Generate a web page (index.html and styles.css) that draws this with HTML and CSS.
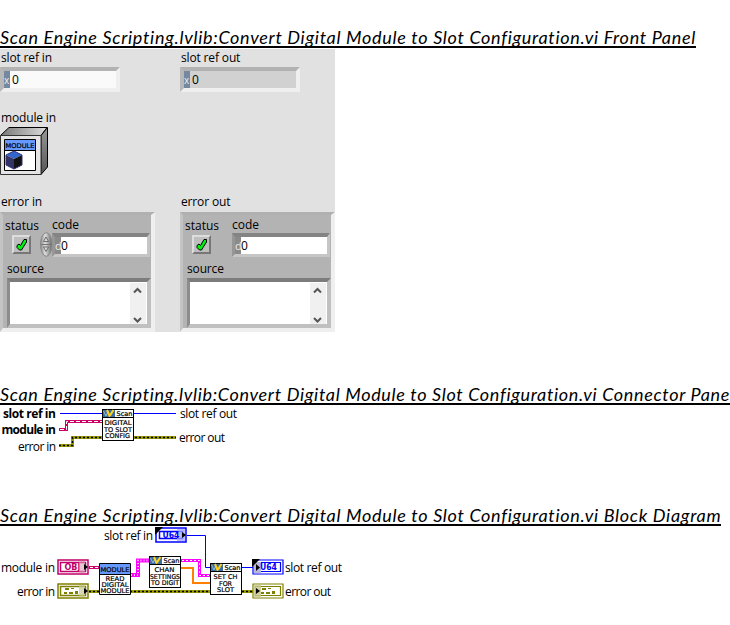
FILE: index.html
```
<!DOCTYPE html>
<html lang="en">
<head>
<meta charset="utf-8">
<title>Convert Digital Module to Slot Configuration.vi</title>
<link rel="stylesheet" href="styles.css">
</head>
<body>
<svg class="defs" width="0" height="0" aria-hidden="true">
  <defs>
    <g id="check"><path d="M2 7.5 4 6 5.5 7.5 9 1.5h2.5V4L8 9.5 6.5 12H4.5L2 9.5Z" fill="#00f010" stroke="#000" stroke-width="1"/></g>
    <g id="scan">
      <rect x=".5" y=".5" width="31" height="31" fill="#fff" stroke="#000"/>
      <path d="M1 1h12v7H1z" fill="#3c6ea0"/>
      <path d="M1.500 2 4 7 6 2.500M8.500 7 10 4" fill="none" stroke="#a8cbe8" stroke-width=".8"/>
      <path d="M5 1 7.500 7 11.500 1" fill="none" stroke="#ffd21c" stroke-width="2"/>
      <path d="M1 8.500h30" stroke="#000"/>
      <text class="px" x="14.500" y="7.300" textLength="16" lengthAdjust="spacingAndGlyphs">Scan</text>
    </g>
    <g id="cluster-glyph" fill="#808000">
      <path d="M8 5h4v2H8zM14 5h3v1h-3zM7 9h3v2H7zM12 9h4v2h-4zM18 8h3v3h-3z"/>
    </g>
  </defs>
</svg>

<h2 class="title front-title"><span>Scan Engine Scripting.lvlib:Convert Digital Module to Slot Configuration.vi Front Panel</span></h2>
<section class="panel">
  <div class="column">
    <div class="label">slot ref in</div>
    <div class="field"><span class="radix">x</span><span class="value">0</span></div>
    <div class="label module-label">module in</div>
    <svg class="module" width="48" height="48" viewBox="0 0 48 48">
      <defs><linearGradient id="top"><stop stop-color="#777"/><stop offset="1" stop-color="#ddd"/></linearGradient>
      <linearGradient id="side" x2="0" y2="1"><stop stop-color="#999"/><stop offset="1" stop-color="#555"/></linearGradient></defs>
      <path d="M.5 8.500 9 .5h38L41 8.500z" fill="url(#top)" stroke="#000"/>
      <path d="M41 8.500 47.500 .5V40L41 47.500z" fill="url(#side)" stroke="#000"/>
      <path d="M.5 8.500H41v39H.5z" fill="#e4e4e4" stroke="#333"/>
      <path d="M4.500 12.500h31v31h-31z" fill="#fff" stroke="#000"/>
      <path d="M5 13h30v10H5z" fill="#6699ff"/>
      <path d="M5 23.500h30" stroke="#000"/>
      <text class="px" x="5.500" y="20.500" textLength="29" lengthAdjust="spacingAndGlyphs">MODULE</text>
      <path d="M14 24 22 28 14 32 6 28z" fill="#3366cc"/>
      <path d="M6 28 14 32v10l-8-4z" fill="#333366"/>
      <path d="M22 28 14 32v10l8-4z" fill="#111"/>
      <path d="M14 24 22 28v10l-8 4-8-4V28z" fill="none" stroke="#303078"/>
    </svg>
    <div class="label error-label">error in</div>
    <div class="cluster">
      <div class="row">
        <div class="status"><div class="label">status</div>
          <svg class="button" width="19" height="19" viewBox="-1 -1 15 15"><use href="#check"/></svg></div>
        <svg class="spinner" width="13" height="25" viewBox="0 0 13 25">
          <defs><linearGradient id="knob"><stop stop-color="#888"/><stop offset=".4" stop-color="#ddd"/><stop offset="1" stop-color="#666"/></linearGradient></defs>
          <ellipse cx="6.300" cy="12.500" rx="5.800" ry="11.800" fill="url(#knob)" stroke="#888"/>
          <path d="M1 12.500h11" stroke="#777"/>
          <path d="M3.500 9.500 6 5l2.500 4.500zM3.500 15h5L6 19.500z" fill="#ddd" stroke="#555" stroke-width=".8"/>
        </svg>
        <div class="code"><div class="label">code</div>
          <div class="number"><span class="digit">d</span><span>0</span></div></div>
      </div>
      <div class="label source-label">source</div>
      <div class="source"><div class="scroll">
        <svg width="16" height="41" viewBox="0 0 16 41"><path d="M4 9.500 7.500 6 11 9.500M4 35l3.500 3.500L11 35" fill="none" stroke="#555" stroke-width="2"/></svg>
      </div></div>
    </div>
  </div>
  <div class="column">
    <div class="label">slot ref out</div>
    <div class="field readonly"><span class="radix">x</span><span class="value">0</span></div>
    <div class="label error-label out-label">error out</div>
    <div class="cluster">
      <div class="row">
        <div class="status"><div class="label">status</div>
          <svg class="button" width="19" height="19" viewBox="-1 -1 15 15"><use href="#check"/></svg></div>
        <div class="spinner"></div>
        <div class="code"><div class="label">code</div>
          <div class="number"><span class="digit">d</span><span>0</span></div></div>
      </div>
      <div class="label source-label">source</div>
      <div class="source"><div class="scroll">
        <svg width="16" height="41" viewBox="0 0 16 41"><path d="M4 9.500 7.500 6 11 9.500M4 35l3.500 3.500L11 35" fill="none" stroke="#555" stroke-width="2"/></svg>
      </div></div>
    </div>
  </div>
</section>

<h2 class="title pane-title"><span>Scan Engine Scripting.lvlib:Convert Digital Module to Slot Configuration.vi Connector Pane</span></h2>
<svg class="diagram" width="730" height="60" viewBox="0 405 730 60">
  <g class="names">
    <text class="bold" x="3" y="418" textLength="53">slot ref in</text>
    <text class="bold" x="1.500" y="434" textLength="54.500">module in</text>
    <text x="18" y="450.500" textLength="38">error in</text>
    <text x="180" y="418" textLength="57">slot ref out</text>
    <text x="179" y="442" textLength="46">error out</text>
  </g>
  <path d="M60 413.500H176" stroke="#0000ff"/>
  <path d="M59 429.500h7.500v-8H102" fill="none" stroke="#cc0066" stroke-width="3"/>
  <path d="M60 429.500h6.500v-8H102" fill="none" stroke="#fff" stroke-dasharray="4 2"/>
  <path d="M59 445.500h13.500v-8H176" fill="none" stroke="#999900" stroke-width="3"/>
  <path d="M59 445.500h13.500v-8H176" fill="none" stroke="#000" stroke-width="1.500" stroke-dasharray="2 2"/>
  <use href="#scan" x="102" y="409"/>
  <g class="px">
    <text x="104.500" y="424.800" textLength="27" lengthAdjust="spacingAndGlyphs">DIGITAL</text>
    <text x="104" y="432" textLength="28" lengthAdjust="spacingAndGlyphs">TO SLOT</text>
    <text x="105" y="438.200" textLength="25" lengthAdjust="spacingAndGlyphs">CONFIG</text>
  </g>
</svg>

<h2 class="title block-title"><span>Scan Engine Scripting.lvlib:Convert Digital Module to Slot Configuration.vi Block Diagram</span></h2>
<svg class="diagram" width="730" height="80" viewBox="0 526 730 80">
  <g class="names">
    <text x="104" y="540" textLength="49">slot ref in</text>
    <text x="1" y="572" textLength="54">module in</text>
    <text x="17" y="596" textLength="38">error in</text>
    <text x="285" y="572" textLength="57">slot ref out</text>
    <text x="285" y="596" textLength="46">error out</text>
  </g>
  <path d="M187 535.500h18.500v32H210M242 567.500h11" fill="none" stroke="#0000ff"/>
  <path d="M89 567.500h11" stroke="#cc0066" stroke-width="3"/>
  <path d="M90 567.500h10" stroke="#fff" stroke-dasharray="3 2"/>
  <path d="M131 575h7v-14.500h11.500" fill="none" stroke="#ff00ff" stroke-width="4"/>
  <path d="M131 575h7v-14.500h11.500" fill="none" stroke="#ffc4ff" stroke-width="2" stroke-dasharray="1 2"/>
  <path d="M181 560.500h18.500v15H210" fill="none" stroke="#ff00ff" stroke-width="3"/>
  <path d="M182 560.500h17.500v15H210" fill="none" stroke="#fff" stroke-dasharray="2 2"/>
  <path d="M181 568h12v15h17" fill="none" stroke="#ff8000" stroke-width="2"/>
  <path d="M89 591.500h11M130 591.500h81M242 591.500h11" stroke="#999900" stroke-width="3"/>
  <path d="M89 591.500h11M130 591.500h81M242 591.500h11" stroke="#000" stroke-width="1.500" stroke-dasharray="2 2"/>

  <g transform="translate(155 527)">
    <path d="M1 1h30v14H1zM4.500 4.500h23v7h-23z" fill="#fff" stroke="#0000ff" stroke-width="1.500"/>
    <path d="M22 2h8v12h-8z" fill="#a8a8ff" opacity=".75"/><path d="M0 0h8L0 8z"/>
    <text class="pin blue" x="7.500" y="11" textLength="17" lengthAdjust="spacingAndGlyphs">U64</text>
    <path d="M27 5v6l4-3z"/>
  </g>
  <g transform="translate(252 560)">
    <path d="M1 0h30v14H1zM3.500 2.500h25v9h-25z" fill="#fff" stroke="#0000ff" stroke-width="1.200"/>
    <path d="M2 2h7v11H2z" fill="#b8b8dd"/><path d="M0-1h8L0 7z"/>
    <text class="pin blue" x="8" y="10.200" textLength="17" lengthAdjust="spacingAndGlyphs">U64</text>
    <path d="M4 4v7l4-3.500z"/>
  </g>
  <g transform="translate(57 559)">
    <path d="M1 1h30v14H1zM3.500 3.500h25v9h-25z" fill="#fff" stroke="#c00068" stroke-width="1.500"/>
    <text class="pin pink" x="7.500" y="11" textLength="16" lengthAdjust="spacingAndGlyphs">OBJ</text>
    <path d="M22 2h6v12h-6z" fill="#d8a0b8" opacity=".6"/><path d="M27 5v6l4-3z"/>
  </g>
  <g transform="translate(57 583)">
    <path d="M1 1h30v14H1zM3.500 3.500h25v9h-25z" fill="#fff" stroke="#808000" stroke-width="1.500"/>
    <use href="#cluster-glyph"/>
    <path d="M22 2h6v12h-6z" fill="#c8c890" opacity=".7"/><path d="M27 5v6l4-3z"/>
  </g>
  <g transform="translate(252 583)">
    <path d="M1 1h30v14H1zM3.500 3.500h25v9h-25z" fill="#fff" stroke="#808000" stroke-width="1.200"/>
    <use href="#cluster-glyph" x="2"/>
    <path d="M2 2h7v12H2z" fill="#c8c890" opacity=".8"/><path d="M4 5v6l4-3z"/>
  </g>

  <path d="M99.500 563.500h31v31h-31z" fill="#fff" stroke="#000"/>
  <path d="M100 564h30v10h-30z" fill="#6699ff"/><path d="M100 574.500h30" stroke="#000"/>
  <use href="#scan" x="149" y="556"/>
  <use href="#scan" x="210" y="563"/>
  <g class="px">
    <text x="100.500" y="571.500" textLength="29" lengthAdjust="spacingAndGlyphs">MODULE</text>
    <text x="105.500" y="581" textLength="19" lengthAdjust="spacingAndGlyphs">READ</text>
    <text x="101.500" y="587.200" textLength="27" lengthAdjust="spacingAndGlyphs">DIGITAL</text>
    <text x="100.500" y="593.300" textLength="29" lengthAdjust="spacingAndGlyphs">MODULE</text>
    <text x="154.500" y="572.200" textLength="20" lengthAdjust="spacingAndGlyphs">CHAN</text>
    <text x="150" y="579" textLength="30" lengthAdjust="spacingAndGlyphs">SETTINGS</text>
    <text x="151" y="585.200" textLength="28" lengthAdjust="spacingAndGlyphs">TO DIGIT</text>
    <text x="213.500" y="579.200" textLength="24" lengthAdjust="spacingAndGlyphs">SET CH</text>
    <text x="219" y="586" textLength="13" lengthAdjust="spacingAndGlyphs">FOR</text>
    <text x="217" y="592.200" textLength="17" lengthAdjust="spacingAndGlyphs">SLOT</text>
  </g>
</svg>
</body>
</html>
```

FILE: styles.css
```
* { box-sizing: border-box; }
body { margin: 0; background: #fff; color: #000; font: 12px/16px "Open Sans", "Noto Sans", sans-serif; overflow: hidden; }
svg { display: block; }
.defs { position: absolute; }
.title { margin: 0; height: 20px; overflow: hidden; border-bottom: 2px solid #000; font: italic 400 18px/18px Lato, sans-serif; letter-spacing: .69px; white-space: nowrap; }
.front-title { margin-top: 28px; width: 696px; }
.pane-title { margin-top: 53px; width: 730px; letter-spacing: .67px; }
.block-title { margin-top: 41px; width: 721px; }
.panel { display: grid; grid-template-columns: 180px 155px; width: 335px; height: 283px; margin-top: 1px; background: #e1e1e1; }
.column { padding-top: 1px; }
.label { height: 16px; padding-left: 1px; letter-spacing: -.15px; white-space: nowrap; }
.field { display: flex; width: 120px; height: 25px; margin-top: 1px; border: 4px solid; border-color: #b2b2b2 #efefef #efefef #b8b8b8; background: #fafafa; line-height: 17px; }
.readonly { background: #d1d1d1; }
.radix { width: 6px; background: #7488a0; color: #eee; font-size: 10px; line-height: 18px; }
.value { padding-left: 2px; }
.module-label { margin-top: 18px; }
.module { margin-top: 1px; }
.error-label { margin-top: 19px; }
.out-label { margin-top: 102px; }
.cluster { width: 155px; height: 120px; margin-top: 2px; padding: 2px 0 0 4px; border: solid; border-width: 3px 4px 4px 3px; border-color: #b0b0b0 #efefef #efefef #c4c4c4; background: #b3b3b3; }
.row { display: flex; height: 43px; margin-left: -3px; }
.status { width: 36px; padding-top: 1px; }
.status .label, .code .label { letter-spacing: 0; }
.code .label { height: 15px; padding-left: 0; line-height: 15px; }
.button { margin: 1px 0 0 8px; border: 2px solid; border-color: #ddd #777 #777 #ddd; background: #bebebe; }
.spinner { width: 13px; margin: 15px -1px 0 0; }
.code { width: 98px; }
.number { display: flex; width: 98px; height: 24px; margin-top: 1px; padding-left: 1px; border: solid; border-width: 4px 3px 3px; border-color: #848484 #c6c6c6 #c6c6c6 #969696; background: #fff; line-height: 17px; }
.digit { width: 6px; margin: 0 0 0 -1px; background: #8a8a8a; color: #eee; font-size: 11px; }
.source-label { margin-top: 1px; padding-left: 0; }
.source { width: 144px; height: 50px; margin-top: 1px; border: solid; border-width: 4px 4px 4px 3px; border-color: #7c7c7c #c0c0c0 #c0c0c0 #8c8c8c; background: #fff; }
.scroll { width: 16px; height: 41px; margin: 1px 1px 0 auto; background: #f0f0f0; }
.names { font: 12px "Open Sans", "Noto Sans", sans-serif; }
.bold { font-weight: 700; }
.px { font: 6.5px "DejaVu Sans", sans-serif; fill: #000; stroke: #000; stroke-width: .2px; }
.pin { font: 700 8px "DejaVu Sans", sans-serif; }
.blue { fill: #0000ff; }
.pink { fill: #c00068; }
```
